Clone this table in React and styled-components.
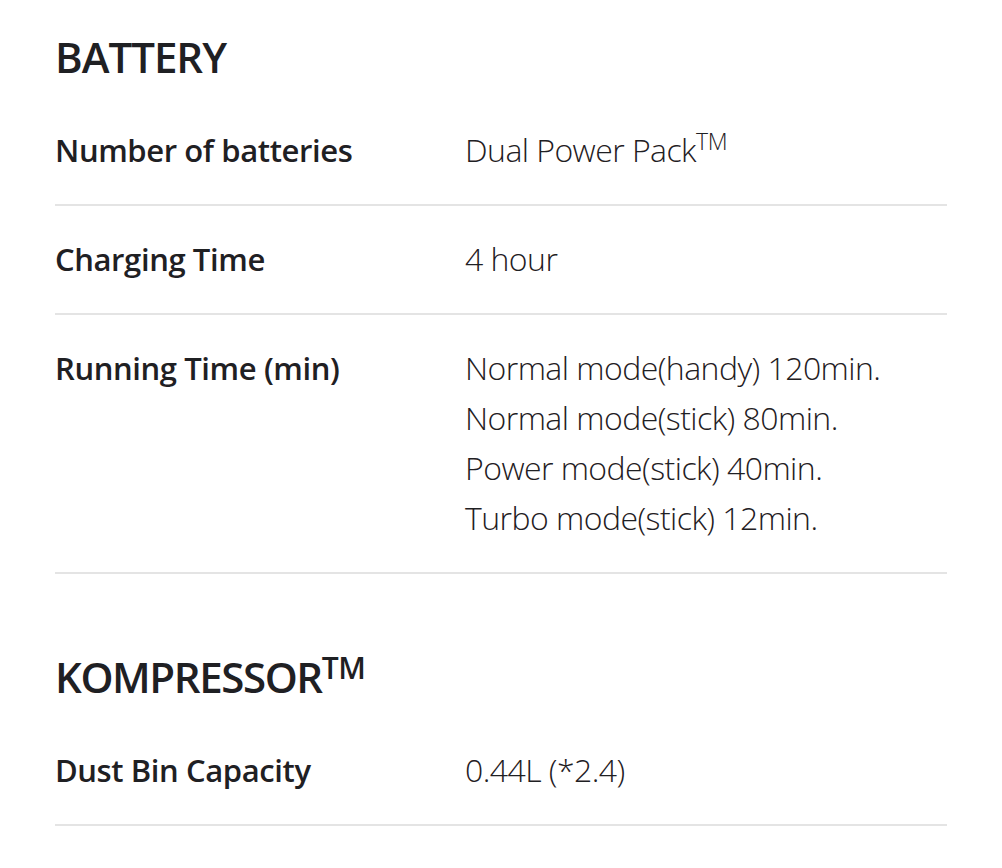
import React from 'react';
import styled, { createGlobalStyle } from 'styled-components';

const GlobalStyle = createGlobalStyle`
    body {
        margin: 0;
        background: #ffffff;
        font-family: "Open Sans", "Liberation Sans", sans-serif;
        color: #1f2023;
    }
`;

const Page = styled.div`
    padding: 32px 55px 0 55px;
    width: 892px;
`;

const Section = styled.section`
    & + & {
        margin-top: 78px;
    }
`;

const Heading = styled.h2`
    margin: 0 0 ${(p) => p.$gap || 15}px;
    font-size: 42px;
    line-height: 50px;
    font-weight: 600;
    letter-spacing: ${(p) => p.$tight ? -1.4 : -1}px;

    sup {
        font-size: 30px;
        line-height: 0;
        vertical-align: 14px;
        font-weight: 600;
        letter-spacing: -0.3px;
    }
`;

const Row = styled.div`
    display: grid;
    grid-template-columns: 410px 1fr;
    padding: 28px 0 29px;
    border-bottom: 2px solid #e4e4e4;
    line-height: 50px;
`;

const Label = styled.div`
    font-size: 31px;
    font-weight: 600;
    letter-spacing: -0.4px;
`;

const Value = styled.div`
    font-size: 32px;
    font-weight: 300;
    letter-spacing: -0.55px;

    sup {
        font-size: 23px;
        line-height: 0;
        vertical-align: 12px;
        letter-spacing: -0.3px;
    }
`;

const Line = styled.div``;

const sections = [
    {
        title: 'BATTERY',
        rows: [
            { label: 'Number of batteries', value: [<>Dual Power Pack<sup>TM</sup></>] },
            { label: 'Charging Time', value: ['4 hour'] },
            {
                label: 'Running Time (min)',
                value: [
                    'Normal mode(handy) 120min.',
                    'Normal mode(stick) 80min.',
                    'Power mode(stick) 40min.',
                    'Turbo mode(stick) 12min.',
                ],
            },
        ],
    },
    {
        title: <>KOMPRESSOR<sup>TM</sup></>,
        gap: 15,
        tight: true,
        rows: [{ label: 'Dust Bin Capacity', value: ['0.44L (*2.4)'] }],
    },
];

const App = () => {
    return (
        <>
            <GlobalStyle />
            <Page>
                {sections.map((s, i) => (
                    <Section key={i}>
                        <Heading $gap={s.gap} $tight={s.tight}>{s.title}</Heading>
                        {s.rows.map((r) => (
                            <Row key={r.label}>
                                <Label>{r.label}</Label>
                                <Value>
                                    {r.value.map((v, j) => (
                                        <Line key={j}>{v}</Line>
                                    ))}
                                </Value>
                            </Row>
                        ))}
                    </Section>
                ))}
            </Page>
        </>
    );
};

export default App;
